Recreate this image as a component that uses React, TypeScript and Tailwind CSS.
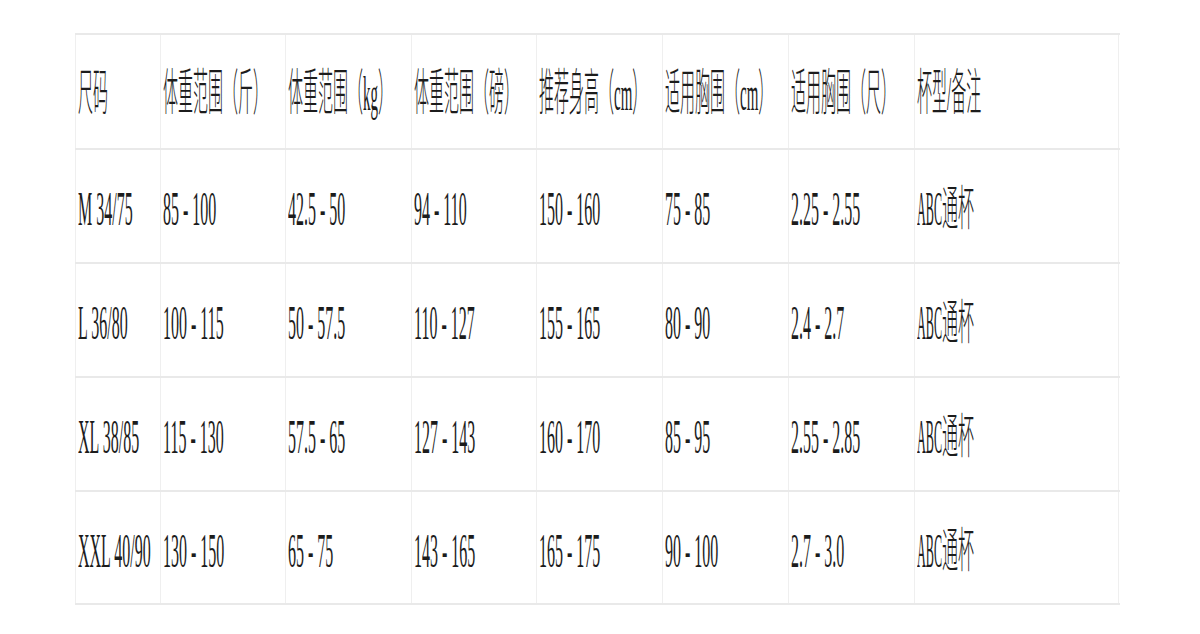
import React from "react";

const header = ["尺码", "体重范围（斤）", "体重范围（kg）", "体重范围（磅）", "推荐身高（cm）", "适用胸围（cm）", "适用胸围（尺）", "杯型/备注"];
const rows = [
  ["M 34/75", "85 - 100", "42.5 - 50", "94 - 110", "150 - 160", "75 - 85", "2.25 - 2.55", "ABC通杯"],
  ["L 36/80", "100 - 115", "50 - 57.5", "110 - 127", "155 - 165", "80 - 90", "2.4 - 2.7", "ABC通杯"],
  ["XL 38/85", "115 - 130", "57.5 - 65", "127 - 143", "160 - 170", "85 - 95", "2.55 - 2.85", "ABC通杯"],
  ["XXL 40/90", "130 - 150", "65 - 75", "143 - 165", "165 - 175", "90 - 100", "2.7 - 3.0", "ABC通杯"],
];

const font = { fontFamily: '"Liberation Serif", "Noto Sans CJK SC", serif' };

function Cell({ text, head }: { text: string; head?: boolean }) {
  // Render "ABC" narrower, like the half-width glyphs of the reference
  const parts = text.startsWith("ABC") ? [["ABC", true], [text.slice(3), false]] : [[text, false]];
  return (
    <span
      className={`inline-block origin-center whitespace-pre leading-none font-light text-[#1c1c1c] ${head ? "scale-y-[3.3] text-[15px]" : "scale-y-[3] text-[16px]"}`}
      style={font}
    >
      {parts.map(([t, narrow], i) =>
        narrow ? (
          <span key={i} className="inline-block w-[25px] origin-left scale-x-[0.76]">
            {t as string}
          </span>
        ) : (
          <span key={i}>{t as string}</span>
        )
      )}
    </span>
  );
}

function Row({ cells, h, head, last }: { cells: string[]; h: string; head?: boolean; last?: boolean }) {
  return (
    <div
      className={`grid grid-cols-[85px_125px_126px_125px_126px_126px_126px_205px] border-t-2 border-[#e9e9e9] ${h} ${last ? "border-b-2" : ""}`}
    >
      {cells.map((c, i) => (
        <div
          key={i}
          className={`flex items-center border-l border-[#efefef] pl-[2px] pt-[8px] ${i === cells.length - 1 ? "border-r" : ""}`}
        >
          <Cell text={c} head={head} />
        </div>
      ))}
    </div>
  );
}

export default function App() {
  return (
    <div className="w-[1200px] h-[634px] bg-white pt-[33px] pl-[75px]">
      <div className="w-[1045px]">
        <Row cells={header} h="h-[115px]" head />
        {rows.map((r, i) => (
          <Row key={i} cells={r} h={i === rows.length - 1 ? "h-[115px]" : "h-[114px]"} last={i === rows.length - 1} />
        ))}
      </div>
    </div>
  );
}
